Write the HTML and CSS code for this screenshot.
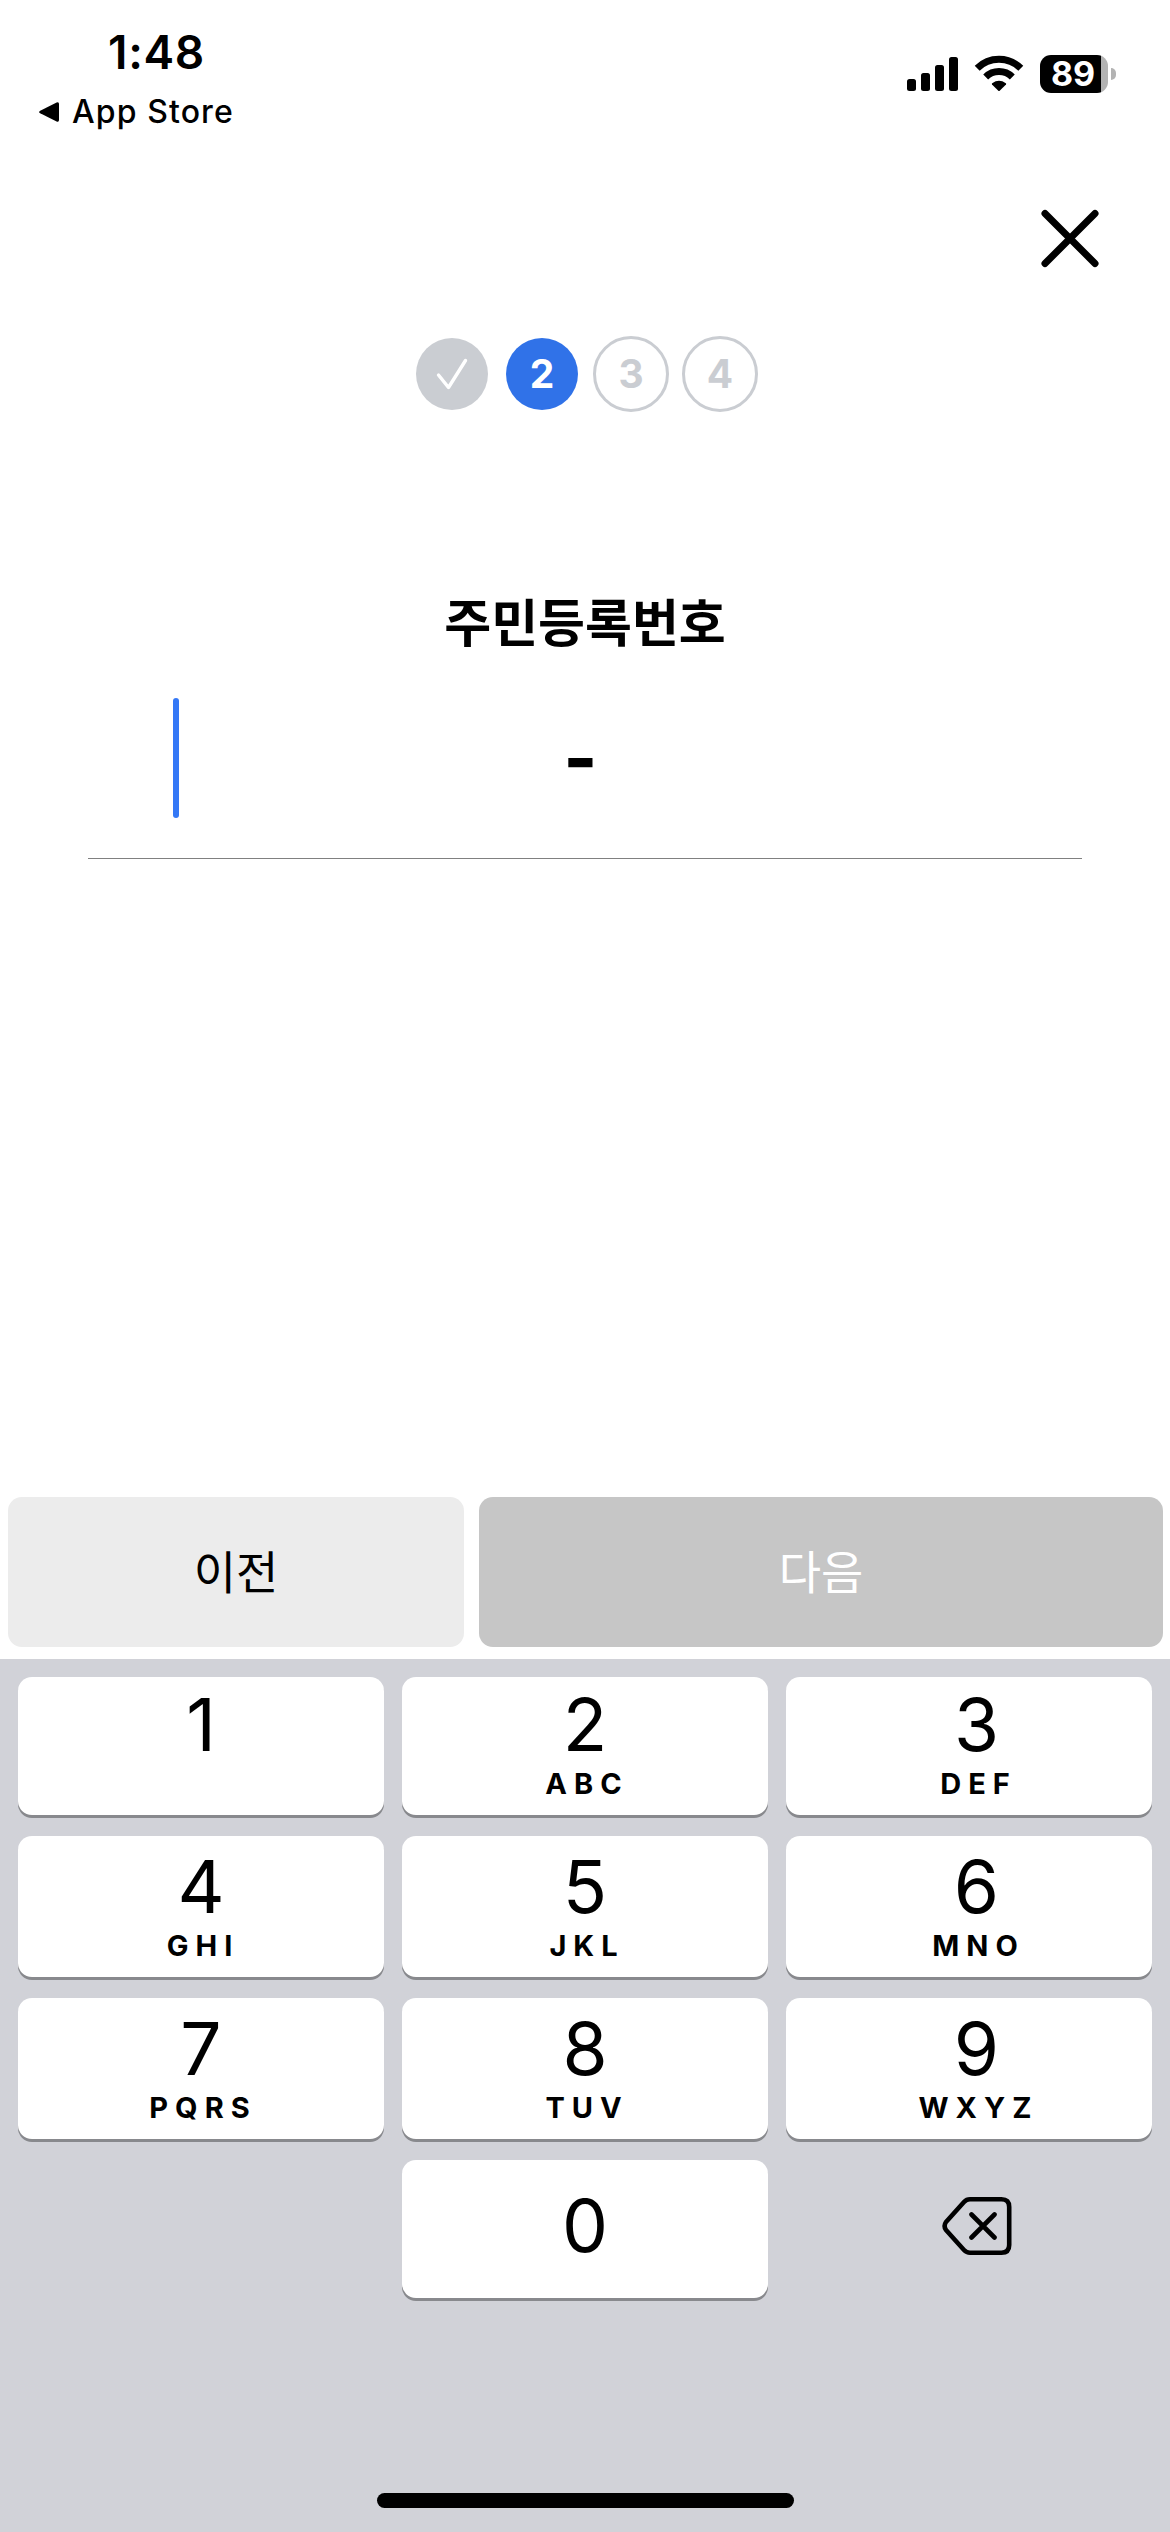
FILE: index.html
```html
<!DOCTYPE html>
<html lang="ko">
<head>
<meta charset="utf-8">
<title>주민등록번호</title>
<link rel="stylesheet" href="styles.css">
</head>
<body>
<div class="screen">
  <header class="status">
    <div class="status-left">
      <div class="time">1:48</div>
      <div class="back-app">
        <svg class="back-arrow" width="22" height="22" viewBox="0 0 22 22"><path d="M2.2 9.7 18.6 1.5Q21 .6 21 3V19Q21 21.4 18.6 20.5L2.2 12.3Q0 11 2.2 9.7Z"/></svg>
        <span>App Store</span>
      </div>
    </div>
    <div class="status-right">
      <svg class="signal" width="52" height="36" viewBox="0 0 52 36"><rect x="0" y="23" width="9" height="12" rx="2.5"/><rect x="14" y="17" width="9" height="18" rx="2.5"/><rect x="28" y="9" width="9" height="26" rx="2.5"/><rect x="42" y="1" width="9" height="34" rx="2.5"/></svg>
      <svg class="wifi" width="50" height="38" viewBox="0 0 50 38"><g fill="none" stroke="#000" stroke-width="7"><path d="M3.2 13.3A31 31 0 0 1 46.8 13.3"/><path d="M11.7 22A19 19 0 0 1 38.3 22"/></g><path d="M18 29.4Q17.5 28.8 18.2 28.2Q25 23.5 31.8 28.2Q32.5 28.8 32 29.4L25.7 35.8Q25 36.4 24.3 35.8Z"/></svg>
      <div class="battery"><div class="battery-body">89</div><div class="battery-cap"></div></div>
    </div>
  </header>
  <div class="close-row">
    <svg class="close" width="60" height="60" viewBox="0 0 60 60"><path d="M5 5.500 55 55.500M55 5.500 5 55.500"/></svg>
  </div>
  <ol class="steps">
    <li class="step done"><svg width="72" height="72" viewBox="0 0 72 72"><path d="M22.5 37 32.500 49.500 49.500 22.500"/></svg></li>
    <li class="step current">2</li>
    <li class="step todo">3</li>
    <li class="step todo">4</li>
  </ol>
  <main class="form">
    <h1 class="title">주민등록번호</h1>
    <div class="field"><span class="caret"></span><span class="dash">-</span></div>
  </main>
  <div class="actions">
    <button class="btn prev">이전</button>
    <button class="btn next">다음</button>
  </div>
  <section class="keyboard">
    <div class="keys">
      <button class="key">1<small></small></button>
      <button class="key">2<small>ABC</small></button>
      <button class="key right">3<small>DEF</small></button>
      <button class="key">4<small>GHI</small></button>
      <button class="key">5<small>JKL</small></button>
      <button class="key right">6<small>MNO</small></button>
      <button class="key">7<small>PQRS</small></button>
      <button class="key">8<small>TUV</small></button>
      <button class="key right">9<small>WXYZ</small></button>
      <span></span>
      <button class="key zero">0</button>
      <button class="delete right"><svg width="72" height="62" viewBox="0 0 72 62"><path d="M29 4.300H60.500Q68.200 4.300 68.200 12V50Q68.200 57.700 60.500 57.700H29Q25.500 57.700 23 55L5 35Q2.200 31 5 27L23 7Q25.500 4.300 29 4.300M30.500 19.500 53.500 42.500M53.500 19.500 30.500 42.500"/></svg></button>
    </div>
    <div class="home"></div>
  </section>
</div>
</body>
</html>
```
FILE: styles.css
```css
* { box-sizing: border-box; }
body { margin: 0; background: #fff; color: #000; font-family: Inter, "Noto Sans CJK KR", sans-serif; }
button { border: 0; padding: 0; font: inherit; color: inherit; }
.screen { width: 1170px; height: 2532px; display: flex; flex-direction: column; overflow: hidden; }

.status { height: 208px; display: flex; justify-content: space-between; }
.status-left { padding-left: 38px; }
.time { padding: 24px 0 0 70px; font-size: 46px; line-height: 56px; font-weight: 600; letter-spacing: 0.7px; }
.back-app { display: flex; align-items: center; gap: 12px; margin-top: 12px; font-size: 32px; line-height: 40px; font-weight: 500; letter-spacing: 1.1px; }
.status-right { display: flex; align-items: flex-start; padding: 55px 54px 0 0; }
.signal { margin: 1px 15px 0 0; }
.wifi { margin-right: 16px; }
.battery { display: flex; align-items: center; gap: 3px; }
.battery-body { width: 68px; height: 38px; border-radius: 11px; background: linear-gradient(90deg, #000 61px, #b3b3b3 61px); color: #fff; font-size: 34px; line-height: 38px; font-weight: 700; text-align: center; padding-right: 2px; }
.battery-cap { width: 5px; height: 12px; border-radius: 0 6px 6px 0; background: #b3b3b3; }

.close-row { height: 128px; display: flex; justify-content: flex-end; padding-right: 70px; }
.close { fill: none; stroke: #000; stroke-width: 7; stroke-linecap: round; }

.steps { list-style: none; margin: 0; padding: 0 0 0 416px; height: 76px; display: flex; align-items: center; }
.step { width: 72px; height: 72px; border-radius: 50%; font-size: 39px; line-height: 72px; font-weight: 700; text-align: center; }
.done { background: #cacdd2; margin-right: 18px; }
.done svg { display: block; fill: none; stroke: #fff; stroke-width: 3.4; stroke-linecap: round; stroke-linejoin: round; }
.current { background: #3072e8; color: #fff; margin-right: 15px; }
.todo { width: 76px; height: 76px; border: 3px solid #cacdd2; color: #cacdd2; line-height: 70px; margin-right: 13px; }

.form { height: 1085px; padding: 172px 88px 0; }
.title { margin: 0 0 2px; font-family: "Noto Sans CJK KR", sans-serif; font-size: 51px; line-height: 72px; font-weight: 700; text-align: center; }
.field { height: 201px; display: grid; grid-template-columns: 391px 1fr; align-items: center; padding-left: 85px; border-bottom: 1px solid #808080; }
.caret { width: 6px; height: 120px; border-radius: 3px; background: #3478f6; }
.dash { font-family: "Noto Sans CJK KR", sans-serif; font-size: 88px; line-height: 120px; font-weight: 700; }

.actions { height: 162px; padding: 0 7px 12px 8px; display: grid; grid-template-columns: 456px 684px; gap: 15px; }
.btn { padding-bottom: 7px; border-radius: 14px; font-family: "Noto Sans CJK KR", sans-serif; font-size: 46px; font-weight: 400; }
.prev { background: #ececec; }
.next { background: #c6c6c6; color: #fff; }

.keyboard { flex: 1; background: #d1d2d8; padding: 18px 18px 24px; display: flex; flex-direction: column; align-items: center; justify-content: space-between; }
.keys { display: grid; grid-template-columns: repeat(3, 366px); grid-template-rows: 138px 141px 141px 138px; column-gap: 18px; row-gap: 21px; }
.key { display: flex; flex-direction: column; align-items: center; justify-content: flex-end; padding-bottom: 13px; border-radius: 14px; background: #fff; box-shadow: 0 3px 0 #88898d; font-size: 73px; line-height: 74px; font-weight: 400; }
.key small { height: 36px; margin-top: 4px; padding-left: 4px; font-size: 29px; line-height: 36px; font-weight: 650; letter-spacing: 7px; }
.key.zero { justify-content: center; padding-bottom: 6px; }
.right { padding-left: 15px; }
.delete { background: none; display: grid; place-items: center; padding-bottom: 7px; }
.delete svg { fill: none; stroke: #000; stroke-width: 4.6; stroke-linecap: round; stroke-linejoin: round; }
.home { width: 417px; height: 15px; border-radius: 8px; background: #000; }
```
